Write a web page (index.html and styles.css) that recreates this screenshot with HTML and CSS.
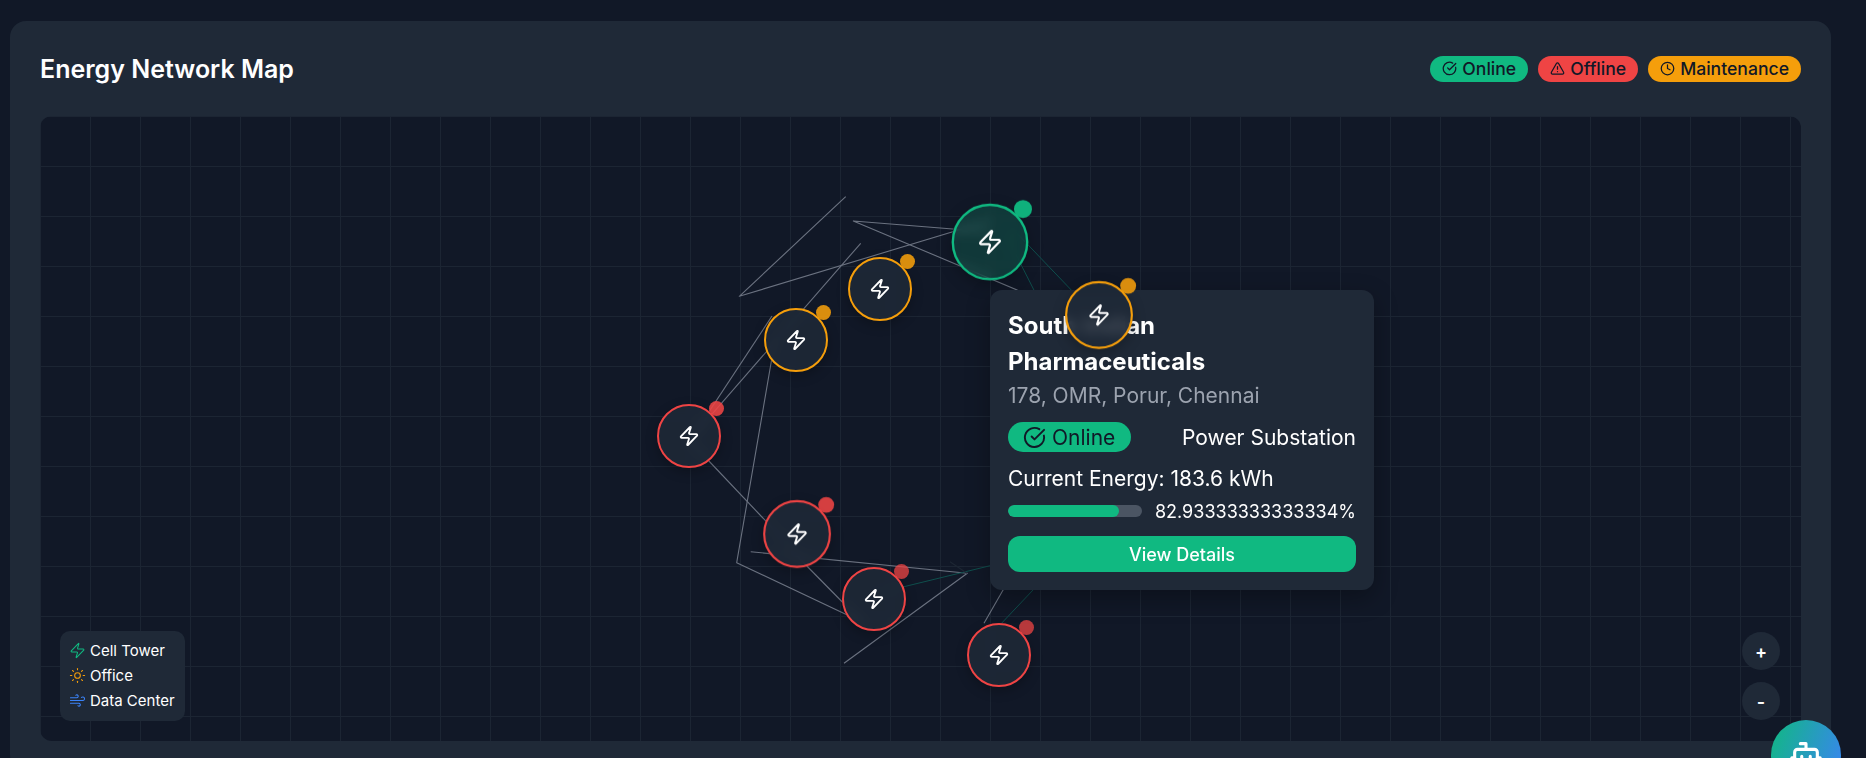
FILE: index.html
```html
<!DOCTYPE html>
<html lang="en">
<head>
<meta charset="utf-8">
<title>Energy Network Map</title>
<link rel="stylesheet" href="styles.css">
</head>
<body>
<svg class="defs" width="0" height="0" aria-hidden="true">
  <symbol id="zap" viewBox="0 0 24 24"><path d="M4 14a1 1 0 0 1-.78-1.63l9.9-10.2a.5.5 0 0 1 .86.46l-1.92 6.02A1 1 0 0 0 13 10h7a1 1 0 0 1 .78 1.63l-9.9 10.2a.5.5 0 0 1-.86-.46l1.92-6.02A1 1 0 0 0 11 14z"/></symbol>
  <symbol id="check" viewBox="0 0 24 24"><path d="M21.801 10A10 10 0 1 1 17 3.335"/><path d="m9 11 3 3L22 4"/></symbol>
  <symbol id="alert" viewBox="0 0 24 24"><path d="m21.73 18-8-14a2 2 0 0 0-3.48 0l-8 14A2 2 0 0 0 4 21h16a2 2 0 0 0 1.73-3"/><path d="M12 9v4"/><path d="M12 17h.01"/></symbol>
  <symbol id="clock" viewBox="0 0 24 24"><circle cx="12" cy="12" r="10"/><path d="M12 6v6l4 2"/></symbol>
  <symbol id="sun" viewBox="0 0 24 24"><circle cx="12" cy="12" r="4"/><path d="M12 2v2"/><path d="M12 20v2"/><path d="m4.93 4.93 1.41 1.41"/><path d="m17.66 17.66 1.41 1.41"/><path d="M2 12h2"/><path d="M20 12h2"/><path d="m6.34 17.66-1.41 1.41"/><path d="m19.07 4.93-1.41 1.41"/></symbol>
  <symbol id="wind" viewBox="0 0 24 24"><path d="M17.7 7.7a2.5 2.5 0 1 1 1.8 4.3H2"/><path d="M9.6 4.6A2 2 0 1 1 11 8H2"/><path d="M12.6 19.4A2 2 0 1 0 14 16H2"/></symbol>
  <symbol id="bot" viewBox="0 0 24 24"><path d="M12 8V4H8"/><rect x="4" y="8" width="16" height="12" rx="2"/><path d="M2 14h2"/><path d="M20 14h2"/><path d="M15 13v2"/><path d="M9 13v2"/></symbol>
</svg>

<main class="card">
  <header class="card-head">
    <h1 class="title">Energy Network Map</h1>
    <div class="badges">
      <span class="badge online"><svg class="ico"><use href="#check"/></svg>Online</span>
      <span class="badge offline"><svg class="ico"><use href="#alert"/></svg>Offline</span>
      <span class="badge maint"><svg class="ico"><use href="#clock"/></svg>Maintenance</span>
    </div>
  </header>

  <section class="map">
    <svg class="links" viewBox="40 116 1761 625" width="1761" height="625" aria-hidden="true">
      <g class="gray">
        <path d="M845.7 196.7 739.3 296.3 990 220.5"/>
        <path d="M990 232 853.3 221 1060 308"/>
        <path d="M860.7 243.3 693 436"/>
        <path d="M772 316 693 436"/>
        <path d="M775 340 736.7 562.7 860 621"/>
        <path d="M689 440 797 554"/>
        <path d="M750.7 551.7 967.3 573.3 844 663.3"/>
        <path d="M797 556 865 625"/>
        <path d="M1020 560.5 984 623.3"/>
      </g>
      <g class="green">
        <path d="M1010 226 1099 319"/>
        <path d="M1005 233 1040 302"/>
        <path d="M874 594 1030 556"/>
        <path d="M1060 561.5 998 627"/>
      </g>
      <path class="faint" d="M950 561.7 967 573.3"/>
    </svg>

    <div class="node amber" style="left:840px;top:173px"><svg class="zap"><use href="#zap"/></svg><i class="dot d2"></i></div>
    <div class="node amber" style="left:756px;top:224px"><svg class="zap"><use href="#zap"/></svg><i class="dot d2"></i></div>
    <div class="node red" style="left:649px;top:320px"><svg class="zap"><use href="#zap"/></svg><i class="dot d2"></i></div>
    <div class="node red md" style="left:757px;top:418px"><svg class="zap"><use href="#zap"/></svg><i class="dot d2"></i></div>
    <div class="node red" style="left:834px;top:483px"><svg class="zap"><use href="#zap"/></svg><i class="dot d3"></i></div>
    <div class="node red" style="left:959px;top:539px"><svg class="zap"><use href="#zap"/></svg><i class="dot d3"></i></div>
    <div class="node green lg" style="left:950px;top:125.5px"><svg class="zap"><use href="#zap"/></svg><i class="dot d1"></i></div>

    <article class="tip">
      <h2 class="tip-title">South Indian Pharmaceuticals</h2>
      <p class="tip-addr">178, OMR, Porur, Chennai</p>
      <div class="tip-row">
        <span class="tip-badge"><svg class="tip-ico"><use href="#check"/></svg>Online</span>
        <span>Power Substation</span>
      </div>
      <p class="tip-energy">Current Energy: 183.6 kWh</p>
      <div class="tip-progress">
        <div class="track"><div class="fill" style="width:82.93%"></div></div>
        <span class="pct">82.93333333333334%</span>
      </div>
      <button class="tip-btn">View Details</button>
    </article>

    <div class="node amber md top" style="left:1059px;top:199px"><svg class="zap"><use href="#zap"/></svg><i class="dot d2"></i></div>

    <aside class="legend">
      <div class="leg-row"><svg class="leg-ico c-green"><use href="#zap"/></svg>Cell Tower</div>
      <div class="leg-row"><svg class="leg-ico c-amber"><use href="#sun"/></svg>Office</div>
      <div class="leg-row"><svg class="leg-ico c-blue"><use href="#wind"/></svg>Data Center</div>
    </aside>

    <div class="zoom">
      <button class="zoom-btn">+</button>
      <button class="zoom-btn">-</button>
    </div>
  </section>
</main>

<button class="fab" aria-label="Assistant"><svg class="fab-ico"><use href="#bot"/></svg></button>
</body>
</html>
```
FILE: styles.css
```css
* { box-sizing: border-box; }
html, body { margin: 0; height: 758px; overflow: hidden; }
body {
  position: relative;
  background: #111827;
  color: #fff;
  font-family: Inter, "Liberation Sans", sans-serif;
  padding: 21px 35px 0 10px;
}
.defs { position: absolute; }
svg { fill: none; stroke: currentColor; stroke-width: 2; stroke-linecap: round; stroke-linejoin: round; }

.card {
  background: #1f2937;
  border-radius: 16px;
  padding: 30px;
  height: 750px;
}
.card-head { display: flex; justify-content: space-between; align-items: center; height: 35px; margin-bottom: 30px; }
.title { margin: 0; font-size: 25px; font-weight: 600; }
.badges { display: flex; gap: 10px; }
.badge {
  display: flex; align-items: center; gap: 5px;
  height: 26px; padding: 0 12px;
  border-radius: 13px;
  color: #111827;
  font-size: 17.6px;
  font-weight: 500;
  line-height: 1;
}
.ico { width: 15px; height: 15px; flex: none; }
.online { background: #10b981; }
.offline { background: #ef4444; }
.maint { background: #f59e0b; }

.map {
  position: relative;
  height: 625px;
  border-radius: 12px;
  overflow: hidden;
  background-color: #111827;
  background-image:
    linear-gradient(#1c2533 1px, transparent 1px),
    linear-gradient(90deg, #1c2533 1px, transparent 1px);
  background-size: 50px 50px;
}
.links { position: absolute; left: 0; top: 0; stroke-linecap: butt; }
.links path { stroke-width: 1.1; }
.gray { stroke: #6b7280; }
.links .green path { stroke: #0f4f4d; stroke-width: 1; }
.links .faint { stroke: #1d2633; }

.node {
  position: absolute;
  width: 64px; height: 64px;
  border-radius: 50%;
  border: 2px solid;
  background: rgba(31,41,55,.85);
  -webkit-backdrop-filter: blur(5px);
  backdrop-filter: blur(5px);
  box-shadow: 0 4px 12px rgba(0,0,0,.25);
  transform: translate(-50%,-50%);
  display: flex; align-items: center; justify-content: center;
}
.node.lg { transform: translate(-50%,-50%) scale(1.2); }
.node.md { transform: translate(-50%,-50%) scale(1.06); }
.node.top { z-index: 4; }
.amber { border-color: #f59e0b; }
.red { border-color: #ef4444; }
.green.node { border-color: #10b981; background: rgba(16,185,129,.2); }
.zap { width: 22px; height: 22px; color: #fff; stroke-width: 2; stroke: #fff; }
.dot { position: absolute; top: -5px; right: -5px; width: 15px; height: 15px; border-radius: 50%; }
.amber .dot { background: #f59e0b; }
.red .dot { background: #ef4444; }
.green .dot { background: #10b981; }
.d1 { opacity: .95; }
.d2 { opacity: .88; }
.d3 { opacity: .75; }

.tip {
  position: absolute;
  z-index: 3;
  left: 950px; top: 174px;
  width: 384px; height: 300px;
  padding: 18px;
  background: #1f2937;
  border-radius: 12px;
  box-shadow: 0 8px 24px rgba(0,0,0,.3);
}
.tip-title { margin: 0; font-size: 24px; line-height: 36px; font-weight: 700; }
.tip-addr { margin: 1px 0 0; font-size: 21px; line-height: 30px; color: #9ca3af; }
.tip-row { display: flex; justify-content: space-between; align-items: center; font-size: 21px; margin-top: 11px; height: 30px; }
.tip-badge {
  display: flex; align-items: center; gap: 6px;
  height: 30px; padding: 0 16px 0 15px;
  border-radius: 15px;
  background: #10b981;
  color: #111827;
}
.tip-ico { width: 23px; height: 23px; }
.tip-energy { margin: 12px 0 0; font-size: 21px; line-height: 30px; }
.tip-progress { display: flex; align-items: center; justify-content: space-between; margin-top: 5px; height: 24px; }
.track { width: 134px; height: 12px; border-radius: 6px; background: #4b5563; overflow: hidden; }
.fill { height: 100%; border-radius: 6px; background: #10b981; }
.pct { font-size: 18px; }
.tip-btn {
  display: block; width: 100%; height: 36px; margin-top: 13px;
  border: 0; border-radius: 12px;
  background: #10b981; color: #fff;
  font: 500 18px Inter, sans-serif;
}

.legend {
  position: absolute;
  left: 20px; bottom: 20px;
  width: 125px; height: 90px;
  padding: 7px 9px;
  background: #1f2937;
  border-radius: 10px;
  font-size: 15px;
}
.leg-row { display: flex; align-items: center; gap: 4px; height: 25px; }
.leg-ico { width: 17px; height: 17px; stroke-width: 1.5; }
.c-green { color: #10b981; }
.c-amber { color: #f59e0b; }
.c-blue { color: #3b82f6; }

.zoom {
  position: absolute;
  right: 21px; bottom: 21px;
  display: flex; flex-direction: column; gap: 12px;
}
.zoom-btn {
  width: 38px; height: 38px;
  border: 0; border-radius: 50%;
  background: #1f2937; color: #fff;
  font: 600 18px Inter, sans-serif;
  padding: 0;
}

.fab {
  position: absolute;
  left: 1771px; top: 720px;
  width: 70px; height: 70px;
  border: 0; border-radius: 50%;
  padding: 0;
  background: linear-gradient(110deg, #10b981, #3b82f6);
  color: #fff;
  display: flex; align-items: center; justify-content: center;
}
.fab-ico { width: 34px; height: 34px; stroke-width: 2.2; }
```
